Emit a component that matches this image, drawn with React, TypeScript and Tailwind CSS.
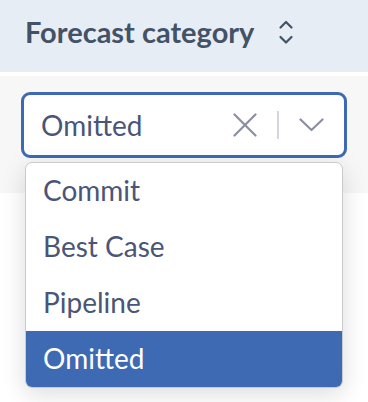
import React, { useState } from 'react';

const options = ['Commit', 'Best Case', 'Pipeline', 'Omitted'];

const SortIcon = () => (
  <svg width="16" height="28" viewBox="0 0 16 28" fill="none" stroke="#435266" strokeWidth="2.2" strokeLinecap="round" strokeLinejoin="round">
    <path d="M2.5 9.5 L8 4 L13.5 9.5" />
    <path d="M2.5 19 L8 24.5 L13.5 19" />
  </svg>
);

const ClearIcon = () => (
  <svg width="24" height="24" viewBox="0 0 24 24" fill="none" stroke="#8b8fa2" strokeWidth="2.2" strokeLinecap="round">
    <path d="M1.5 1.5 L22.5 22.5" />
    <path d="M22.5 1.5 L1.5 22.5" />
  </svg>
);

const ChevronIcon = () => (
  <svg width="25" height="14" viewBox="0 0 25 14" fill="none" stroke="#8b8fa2" strokeWidth="2.2" strokeLinecap="round" strokeLinejoin="round">
    <path d="M1.5 1.5 L12.5 12 L23.5 1.5" />
  </svg>
);

export default function App() {
  const [selected, setSelected] = useState('Omitted');

  return (
    <div className="relative w-[368px] h-[402px] bg-white overflow-hidden font-['Lato',sans-serif]">
      <div className="h-[72px] bg-[#e6edf5] flex items-center pl-[25px] gap-[24px]">
        <span className="text-[29px] font-bold text-[#435266] leading-none pb-[10px]">Forecast category</span>
        <div className="pb-[9px]">
          <SortIcon />
        </div>
      </div>
      <div className="h-[4px] bg-white" />
      <div className="h-[117px] bg-[#f7f7f7] pt-[16px] px-[21px]">
        <div className="h-[66px] rounded-[9px] border-[3px] border-[#3d6ab3] bg-white flex items-center pl-[17px] pr-[20px]">
          <span className="flex-1 text-[28px] text-[#4a5577] leading-none">{selected}</span>
          <ClearIcon />
          <div className="w-[2px] h-[28px] bg-[#d3d6de] mx-[20px]" />
          <ChevronIcon />
        </div>
      </div>

      <div className="absolute left-[25px] top-[162px] w-[318px] rounded-[7px] border border-[#cbcbcb] bg-white shadow-[0_6px_24px_rgba(0,0,0,0.14)] overflow-hidden">
        {options.map((opt) => (
          <div
            key={opt}
            onClick={() => setSelected(opt)}
            className={`h-[56px] flex items-center pl-[17px] pb-[2px] text-[28px] leading-none cursor-pointer ${
              opt === selected ? 'bg-[#3d6ab3] text-white' : 'text-[#4a5577]'
            }`}
          >
            {opt}
          </div>
        ))}
      </div>
    </div>
  );
}
